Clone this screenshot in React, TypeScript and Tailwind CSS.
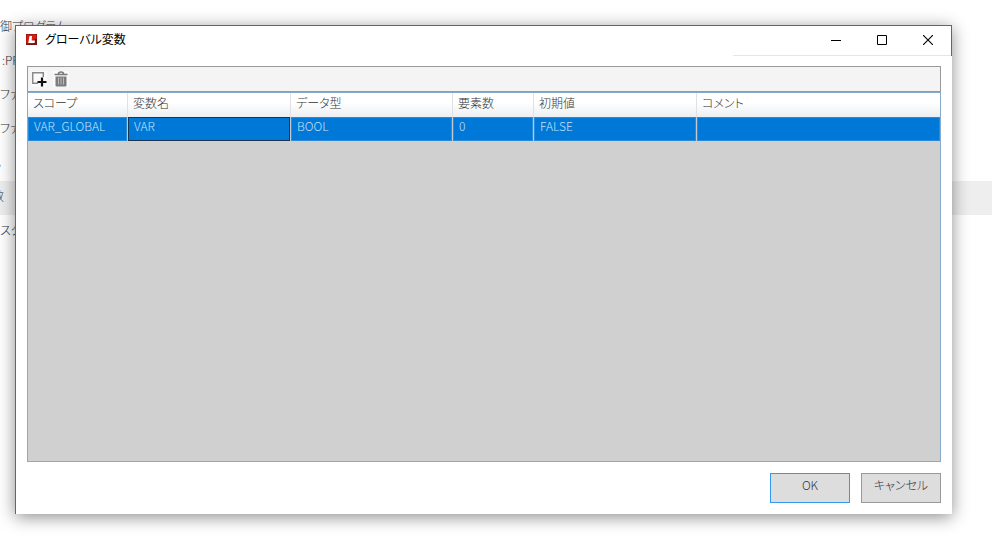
import { useState } from "react";

type Variable = {
  scope: string;
  name: string;
  dataType: string;
  count: string;
  initial: string;
  comment: string;
};

const columns: { key: keyof Variable; label: string; width: string }[] = [
  { key: "scope", label: "スコープ", width: "w-[100px]" },
  { key: "name", label: "変数名", width: "w-[163px]" },
  { key: "dataType", label: "データ型", width: "w-[162px]" },
  { key: "count", label: "要素数", width: "w-[81px]" },
  { key: "initial", label: "初期値", width: "w-[163px]" },
  { key: "comment", label: "コメント", width: "" },
];

const variables: Variable[] = [
  { scope: "VAR_GLOBAL", name: "VAR", dataType: "BOOL", count: "0", initial: "FALSE", comment: "" },
];

const treeItems = ["制御プログラム", ":PRG", "ファン", "ファン", "。", "数", "スタ"];
const treeIndents = ["-ml-3", "ml-0.5", "", "", "-ml-1", "-ml-2", ""];

function AppIcon() {
  return (
    <svg width="11" height="11" viewBox="0 0 11 11" aria-hidden="true">
      <path d="M0 0h11v11H0z" fill="#7a120e" />
      <path d="M.5.500h10v4L7.500 6v3.500H.5z" fill="#dc1a12" />
      <path d="M3.500 2h2.500L5.600 6.500H9L8.600 9H2.300z" fill="#fff" />
    </svg>
  );
}

function AddIcon() {
  return (
    <svg width="16" height="16" viewBox="0 0 16 16" aria-hidden="true">
      <path d="M7 12.300H1.700V1.700h10.600V6" fill="none" stroke="#8a8a8a" strokeWidth="1.500" />
      <path d="M11 6.500v9M6.500 11h9" stroke="#111" strokeWidth="2.200" />
    </svg>
  );
}

function TrashIcon() {
  return (
    <svg width="16" height="16" viewBox="0 0 16 16" aria-hidden="true">
      <path d="M5.500 3q0-2 2.500-2t2.500 2M1.500 3.500h13" fill="none" stroke="#7a7a7a" strokeWidth="1.700" />
      <path d="M2.500 5.500h11v8.700q0 1.300-1.300 1.300H3.800q-1.300 0-1.300-1.300z" fill="#7c7c7c" />
      <path d="M5.500 6.500v7M8 6.500v7M10.500 6.500v7" stroke="#bbb" />
    </svg>
  );
}

function TitleBar() {
  return (
    <header className="flex h-[30px] border-r border-[#666] pl-2.5">
      <div className="flex flex-1 items-center gap-2 pb-1">
        <AppIcon />
        <h1 className="text-xs leading-4 font-normal text-black">グローバル変数</h1>
      </div>
      <div className="flex w-[218px] justify-end border-b border-[#e6e6e6] text-black">
        <button aria-label="最小化" className="flex w-[46px] items-center justify-center pb-0.5">
          <svg width="10" height="10" viewBox="0 0 10 10">
            <path d="M0 5.500h10" stroke="currentColor" />
          </svg>
        </button>
        <button aria-label="最大化" className="flex w-[46px] items-center justify-center pb-0.5">
          <svg width="10" height="10" viewBox="0 0 10 10">
            <path d="M.5.500h9v9h-9z" fill="none" stroke="currentColor" />
          </svg>
        </button>
        <button aria-label="閉じる" className="flex w-[46px] items-center justify-center pb-0.5">
          <svg width="10" height="10" viewBox="0 0 10 10">
            <path d="M0 0l10 10M10 0L0 10" stroke="currentColor" strokeWidth="1.100" />
          </svg>
        </button>
      </div>
    </header>
  );
}

export default function App() {
  const [current, setCurrent] = useState<keyof Variable>("name");

  return (
    <main className="relative min-h-screen overflow-hidden bg-white font-['Noto_Sans_CJK_JP',sans-serif] text-xs font-light text-[#333] [font-feature-settings:'palt']">
      <ul className="pt-[11px]">
        {treeItems.map((item, i) => (
          <li key={i} className={`flex h-[34px] items-center pb-1 ${i === 5 ? "bg-[#eee]" : ""}`}>
            <span className={`whitespace-nowrap ${treeIndents[i]}`}>{item}</span>
          </li>
        ))}
      </ul>

      <section className="absolute top-[25px] right-10 bottom-8 left-[15px] flex flex-col border-t border-l border-[#666] bg-white shadow-[0_3px_16px_rgba(0,0,0,0.45)]">
        <TitleBar />

        <div className="flex flex-1 flex-col px-[11px] pt-2.5 pb-[11px]">
          <div className="flex h-[26px] items-center gap-1.5 border border-[#999] bg-[#f4f4f4] px-[3px]">
            <button aria-label="追加" className="bg-[#fafafa]">
              <AddIcon />
            </button>
            <button aria-label="削除" className="bg-[#fafafa]">
              <TrashIcon />
            </button>
          </div>

          <div className="flex-1 border border-[#88aacb] bg-[#d0d0d0]">
            <table className="w-full table-fixed border-separate border-spacing-0 text-left">
              <thead>
                <tr className="h-6 bg-linear-to-b from-white from-40% to-[#eceef1]">
                  {columns.map((col) => (
                    <th
                      key={col.key}
                      className={`border-r border-[#dfe1e4] pb-1 pl-[5px] leading-4 font-light last:border-r-0 ${col.width}`}
                    >
                      {col.label}
                    </th>
                  ))}
                </tr>
              </thead>
              <tbody>
                {variables.map((row) => (
                  <tr key={row.name} className="h-6 bg-[#0078d7] text-[#c4e0f7]">
                    {columns.map((col) => (
                      <td
                        key={col.key}
                        onClick={() => setCurrent(col.key)}
                        className="h-6 border-r border-[#c3c9d0] p-0 last:border-r-0"
                      >
                        <div
                          className={`h-6 border pl-[5px] leading-4 ${
                            current === col.key ? "border-[#1c3550]" : "border-[#2a8bdc]"
                          }`}
                        >
                          {row[col.key]}
                        </div>
                      </td>
                    ))}
                  </tr>
                ))}
              </tbody>
            </table>
          </div>

          <footer className="mt-[11px] flex justify-end gap-[11px]">
            <button className="h-[30px] w-20 border border-[#3399ee] bg-[#ddd] pb-1.5">OK</button>
            <button className="h-[30px] w-20 border border-[#999] bg-[#ddd] pb-1.5">キャンセル</button>
          </footer>
        </div>
      </section>
    </main>
  );
}
